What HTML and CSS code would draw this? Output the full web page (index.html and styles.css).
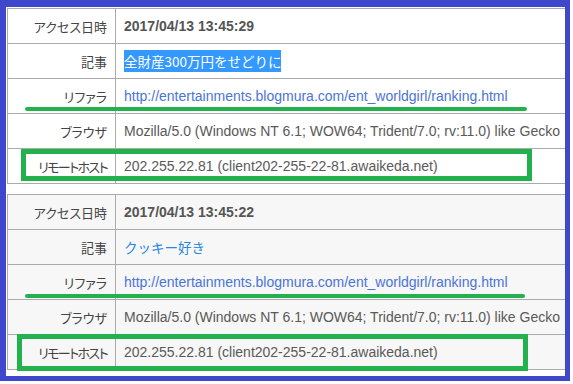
FILE: index.html
```html
<!DOCTYPE html>
<html lang="ja">
<head>
<meta charset="utf-8">
<link rel="stylesheet" href="styles.css">
</head>
<body>
<div class="page">
  <table class="log">
    <tr><th>アクセス日時</th><td class="date">2017/04/13 13:45:29</td></tr>
    <tr><th>記事</th><td><span class="article selected">全財産300万円をせどりに</span></td></tr>
    <tr><th>リファラ</th><td><a class="ref">http://entertainments.blogmura.com/ent_worldgirl/ranking.html</a></td></tr>
    <tr><th>ブラウザ</th><td>Mozilla/5.0 (Windows NT 6.1; WOW64; Trident/7.0; rv:11.0) like Gecko</td></tr>
    <tr><th class="narrow">リモートホスト</th><td>202.255.22.81 (client202-255-22-81.awaikeda.net)</td></tr>
  </table>
  <table class="log alt">
    <tr><th>アクセス日時</th><td class="date">2017/04/13 13:45:22</td></tr>
    <tr><th>記事</th><td><span class="article">クッキー好き</span></td></tr>
    <tr><th>リファラ</th><td><a class="ref">http://entertainments.blogmura.com/ent_worldgirl/ranking.html</a></td></tr>
    <tr><th>ブラウザ</th><td>Mozilla/5.0 (Windows NT 6.1; WOW64; Trident/7.0; rv:11.0) like Gecko</td></tr>
    <tr><th class="narrow">リモートホスト</th><td>202.255.22.81 (client202-255-22-81.awaikeda.net)</td></tr>
  </table>
</div>
<div class="mark underline u1"></div>
<div class="mark box b1"></div>
<div class="mark underline u2"></div>
<div class="mark box b2"></div>
<div class="frame"></div>
</body>
</html>
```
FILE: styles.css
```css
html, body {
  margin: 0;
  padding: 0;
  background: #fff;
}
body {
  position: relative;
  width: 573px;
  height: 384px;
  overflow: hidden;
  font-family: "Liberation Sans", Arial, "Noto Sans CJK JP", sans-serif;
}
.page {
  padding: 8px 0 0 7px;
  display: flex;
  flex-direction: column;
  gap: 10px;
}
.log {
  width: 560px;
  border-collapse: collapse;
  table-layout: fixed;
  background: #fff;
}
.log.alt {
  background: #f7f7f7;
}
.log tr {
  height: 35px;
}
.log th, .log td {
  border: 1px solid #ababab;
  padding: 0;
  vertical-align: middle;
  white-space: nowrap;
  overflow: hidden;
}
.log th {
  width: 99px;
  padding-right: 8px;
  text-align: right;
  font-family: "Noto Sans CJK JP", sans-serif;
  font-feature-settings: "palt";
  font-weight: normal;
  font-size: 13px;
  color: #444;
}
.log th.narrow {
  letter-spacing: -1.6px;
}
.log td {
  padding-left: 8px;
  font-size: 14px;
  color: #595959;
}
.log td.date {
  font-weight: bold;
  color: #555;
}
.article {
  font-family: "Noto Sans CJK JP", sans-serif;
  font-size: 13.5px;
  color: #2a86e0;
}
.article.selected {
  background: #3399ff;
  color: #fff;
  padding: 1px 0;
}
.ref {
  color: #4a74d8;
}
.mark {
  position: absolute;
  box-sizing: border-box;
}
.underline {
  height: 4px;
  background: #22b14c;
  border-radius: 2px;
}
.u1 { left: 25px; top: 107px; width: 502px; }
.u2 { left: 25px; top: 294px; width: 500px; }
.box {
  border: 5px solid #22b14c;
}
.b1 { left: 21px; top: 149px; width: 511px; height: 32px; }
.b2 { left: 17px; top: 334px; width: 511px; height: 37px; }
.frame {
  position: absolute;
  left: 0;
  top: 0;
  width: 570px;
  height: 381px;
  box-sizing: border-box;
  border-style: solid;
  border-color: #3f48cc;
  border-width: 7px 5px 5px 6px;
}
```
